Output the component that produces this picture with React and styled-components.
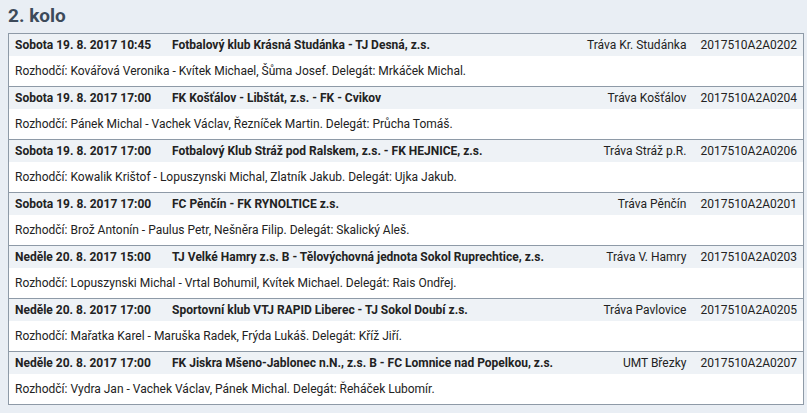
import styled, { createGlobalStyle } from "styled-components";

const Global = createGlobalStyle`
  body {
    margin: 0;
    background: #e9eef4;
    font-family: Roboto, "Noto Sans", sans-serif;
    color: #222;
  }
`;

const matches = [
  {
    date: "Sobota 19. 8. 2017 10:45",
    teams: "Fotbalový klub Krásná Studánka - TJ Desná, z.s.",
    venue: "Tráva Kr. Studánka",
    code: "2017510A2A0202",
    refs: "Rozhodčí: Kovářová Veronika - Kvítek Michael, Šůma Josef. Delegát: Mrkáček Michal.",
  },
  {
    date: "Sobota 19. 8. 2017 17:00",
    teams: "FK Košťálov - Libštát, z.s. - FK - Cvikov",
    venue: "Tráva Košťálov",
    code: "2017510A2A0204",
    refs: "Rozhodčí: Pánek Michal - Vachek Václav, Řezníček Martin. Delegát: Průcha Tomáš.",
  },
  {
    date: "Sobota 19. 8. 2017 17:00",
    teams: "Fotbalový Klub Stráž pod Ralskem, z.s. - FK HEJNICE, z.s.",
    venue: "Tráva Stráž p.R.",
    code: "2017510A2A0206",
    refs: "Rozhodčí: Kowalik Krištof - Lopuszynski Michal, Zlatník Jakub. Delegát: Ujka Jakub.",
  },
  {
    date: "Sobota 19. 8. 2017 17:00",
    teams: "FC Pěnčín - FK RYNOLTICE z.s.",
    venue: "Tráva Pěnčín",
    code: "2017510A2A0201",
    refs: "Rozhodčí: Brož Antonín - Paulus Petr, Nešněra Filip. Delegát: Skalický Aleš.",
  },
  {
    date: "Neděle 20. 8. 2017 15:00",
    teams: "TJ Velké Hamry z.s. B - Tělovýchovná jednota Sokol Ruprechtice, z.s.",
    venue: "Tráva V. Hamry",
    code: "2017510A2A0203",
    refs: "Rozhodčí: Lopuszynski Michal - Vrtal Bohumil, Kvítek Michael. Delegát: Rais Ondřej.",
  },
  {
    date: "Neděle 20. 8. 2017 17:00",
    teams: "Sportovní klub VTJ RAPID Liberec - TJ Sokol Doubí z.s.",
    venue: "Tráva Pavlovice",
    code: "2017510A2A0205",
    refs: "Rozhodčí: Mařatka Karel - Maruška Radek, Frýda Lukáš. Delegát: Kříž Jiří.",
  },
  {
    date: "Neděle 20. 8. 2017 17:00",
    teams: "FK Jiskra Mšeno-Jablonec n.N., z.s. B - FC Lomnice nad Popelkou, z.s.",
    venue: "UMT Březky",
    code: "2017510A2A0207",
    refs: "Rozhodčí: Vydra Jan - Vachek Václav, Pánek Michal. Delegát: Řeháček Lubomír.",
  },
];

export default function App() {
  return (
    <Page>
      <Global />
      <Title>2. kolo</Title>
      <Table>
        {matches.map((m) => (
          <Match key={m.code}>
            <Header>
              <DateCell>{m.date}</DateCell>
              <Teams>{m.teams}</Teams>
              <Venue>{m.venue}</Venue>
              <Code>{m.code}</Code>
            </Header>
            <Body>{m.refs}</Body>
          </Match>
        ))}
      </Table>
    </Page>
  );
}

const Page = styled.div`
  padding: 5px 3px 10px 8px;
`;

const Title = styled.h2`
  margin: 0 0 6px 0;
  font-size: 19px;
  line-height: 22px;
  font-weight: 700;
  color: #3c4a5a;
`;

const Table = styled.div`
  border: 1px solid #8e9aa7;
  border-top: none;
  background: #fff;
`;

const Match = styled.div`
  border-top: 1px solid #8e9aa7;
`;

const Header = styled.div`
  display: flex;
  align-items: center;
  height: 22px;
  padding: 0 6px;
  background: #eef2f6;
  font-size: 12px;
`;

const DateCell = styled.div`
  width: 157px;
  font-weight: 700;
`;

const Teams = styled.div`
  flex: 1;
  font-weight: 700;
`;

const Venue = styled.div`
  text-align: right;
  margin-right: 14px;
`;

const Code = styled.div``;

const Body = styled.div`
  height: 30px;
  display: flex;
  align-items: center;
  padding: 0 6px;
  font-size: 12px;
`;
